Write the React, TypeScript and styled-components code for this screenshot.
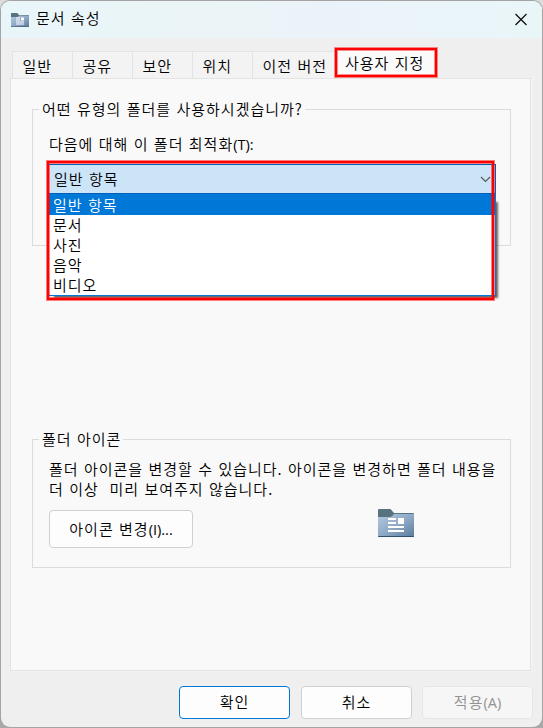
import React from "react";
import styled, { createGlobalStyle } from "styled-components";

const Global = createGlobalStyle`
  *,*::before,*::after{box-sizing:border-box}
  html,body{margin:0;padding:0;width:543px;height:728px;overflow:hidden}
  body{background:#a5a5a5;color:#000;font:350 15px/20px "Noto Sans CJK KR","Noto Sans CJK KR DemiLight",sans-serif;letter-spacing:1px;word-spacing:1px;white-space:pre}
  button{font:inherit;letter-spacing:inherit;word-spacing:inherit;color:inherit;margin:0;padding:0}
`;
const Backdrop = styled.div`
  width: 543px; height: 728px; padding: 1px;
  background: linear-gradient(#dcdcdc 0 12px, #a9a9a9 12px);
`;
const Window = styled.div`
  width: 541px; height: 726px; background: #efefef; border-radius: 9px; overflow: hidden;
  box-shadow: 0 0 0 1px #a5a3a4;
  display: flex; flex-direction: column;
`;
const TitleBar = styled.header`
  height: 37px; flex: none; display: flex; align-items: center; padding: 0 14px 0 10px;
  background: linear-gradient(90deg, #e9f6f9, #ebf4f7 45%, #ebf3fa 60%, #e9f6f8);
`;
const Title = styled.span`flex: 1; margin-left: 7px; padding-bottom: 4px;`;
const CloseButton = styled.button`
  border: 0; background: none; width: 14px; height: 14px; display: flex;
`;
const Tabs = styled.nav`
  height: 40px; flex: none; display: flex; align-items: flex-end; padding-left: 11px;
`;
const Tab = styled.button<{ $w: number }>`
  width: ${p => p.$w}px; height: 27px; border: 1px solid #e3e3e3; border-width: 1px 0 0 1px;
  background: #f3f3f3; text-align: left; padding-left: 9.5px; line-height: 25px;
`;
const SelectedTab = styled.button`
  width: 102px; height: 29px; background: #fafafa; border: 2px solid #f00; position: relative;
  box-shadow: 0 0 0 1px #ff000070, inset 0 0 0 1px #ff000070;
  text-align: left; padding-left: 8px; line-height: 23px; margin-bottom: 1px;
`;
const Panel = styled.main`
  width: 521px; height: 593px; flex: none; margin-left: 9px; background: #f9f9f9;
  border: 1px solid #e3e3e3; padding: 20px 19px 0 21px; box-shadow: 2px 1px 0 #f2f2f2;
`;
const Group = styled.section<{ $h: number; $gap: number }>`
  height: ${p => p.$h}px; border: 1px solid #dcdcdc; margin: 10px 0 ${p => p.$gap}px;
  padding: 0 14px 0 16px;
`;
const Legend = styled.h2`
  font: inherit; margin: -12px 0 0 -10px; padding: 0 2px 0 3px; height: 22px; line-height: 22px;
  width: max-content; background: #f9f9f9;
`;
const Label = styled.div`margin-top: 14px; height: 20px;`;
const Latin = styled.span`
  font-family: "Open Sans", "Noto Sans", sans-serif; font-weight: 400; font-size: 14.5px;
  letter-spacing: 0; line-height: 1;
`;
const Select = styled.div`
  position: relative; width: 448px; height: 132px; margin: 10px 0 0 -1px; z-index: 2;
  background: #fff;
  &::before {
    content: ""; position: absolute; inset: 36px 0 0 4px; z-index: -1; box-shadow: 2px 2px 2px 0 #0009;
  }
  &::after {
    content: ""; position: absolute; left: -1px; top: -3px; width: 447px; height: 139px;
    border: 2px solid #f00; box-shadow: 0 0 0 1px #ff000080, inset 0 0 0 1px #ff000080;
  }
`;
const Current = styled.div`
  height: 29px; display: flex; align-items: center; justify-content: space-between;
  background: #cce4f8; border: 1px solid #005fb8; border-bottom: 0; padding: 0 4px 0 5px;
`;
const Options = styled.div`
  border: 1px solid #0078d7; border-top-color: #005fb8; height: 103px; background: #fff;
`;
const Option = styled.div<{ $on?: boolean }>`
  height: ${p => (p.$on ? 21 : 20)}px; line-height: ${p => (p.$on ? 21 : 19)}px; padding-left: 4px;
  background: ${p => (p.$on ? "#0078d7" : "#fff")}; color: ${p => (p.$on ? "#fff" : "#000")};
`;
const Description = styled.p`margin: 9px -10px 0 0;`;
const IconRow = styled.div`
  display: flex; justify-content: space-between; align-items: flex-start; padding: 10px 82px 0 0;
`;
const Button = styled.button<{ $w: number; $h: number; $kind?: "primary" | "disabled" }>`
  width: ${p => p.$w}px; height: ${p => p.$h}px; border-radius: 4px; padding-bottom: 2px;
  border: 1px solid ${p => (p.$kind === "primary" ? "#0078d4" : p.$kind === "disabled" ? "#e6e6e6" : "#d0d0d0")};
  background: ${p => (p.$kind === "disabled" ? "#f6f6f6" : "#fdfdfd")};
  color: ${p => (p.$kind === "disabled" ? "#929292" : "#000")};
`;
const ChangeIconButton = styled(Button)`margin-top: 1px; padding-bottom: 0;`;
const ApplyButton = styled(Button)`margin-left: -1px;`;
const Footer = styled.footer`display: flex; gap: 11px; padding: 15px 0 0 178px;`;

const FolderIcon = ({ w, h }: { w: number; h: number }) => (
  <svg width={w} height={h} viewBox="0 0 36 28" preserveAspectRatio="none">
    <defs>
      <linearGradient id="folder" x1="0" y1="0" x2="1" y2="1">
        <stop offset="0" stopColor="#b4c9de" />
        <stop offset=".5" stopColor="#8faac8" />
        <stop offset="1" stopColor="#5c7b9d" />
      </linearGradient>
    </defs>
    <path d="M1 0H12.5L16 4H35a1 1 0 0 1 1 1V14H0V1Q0 0 1 0" fill="#56737f" />
    <path d="M0 8H12Q14 8 16 5H36V27Q36 28 35 28H1Q0 28 0 27Z" fill="url(#folder)" />
    <path d="M0 27H36Q36 28 35 28H1Q0 28 0 27" fill="#324f6b" />
    <path d="M10 9h8v2h-8zM10 13h8v2h-8zM20 9h6v6h-6zM10 17h16v2H10zM10 21h16v2H10z" fill="#fff" />
  </svg>
);

const tabs = ["일반", "공유", "보안", "위치"];
const options = ["일반 항목", "문서", "사진", "음악", "비디오"];

export default function App() {
  return (
    <>
      <Global />
      <Backdrop>
        <Window>
          <TitleBar>
            <FolderIcon w={18} h={14} />
            <Title>문서 속성</Title>
            <CloseButton aria-label="닫기">
              <svg width="14" height="14" viewBox="0 0 14 14">
                <path d="M1.5 1 12.5 12M12.5 1 1.5 12" stroke="#111" strokeWidth="1.3" />
              </svg>
            </CloseButton>
          </TitleBar>
          <Tabs>
            {tabs.map(t => <Tab key={t} $w={60}>{t}</Tab>)}
            <Tab $w={83}>이전 버전</Tab>
            <SelectedTab>사용자 지정</SelectedTab>
          </Tabs>
          <Panel>
            <Group $h={137} $gap={193}>
              <Legend>어떤 유형의 폴더를 사용하시겠습니까?</Legend>
              <Label>다음에 대해 이 폴더 최적화<Latin>(T):</Latin></Label>
              <Select>
                <Current>
                  일반 항목
                  <svg width="11" height="7" viewBox="0 0 11 7">
                    <path d="M1 1 5.5 5.5 10 1" fill="none" stroke="#555" strokeWidth="1.1" />
                  </svg>
                </Current>
                <Options>
                  {options.map((o, i) => <Option key={o} $on={i === 0}>{o}</Option>)}
                </Options>
              </Select>
            </Group>
            <Group $h={129} $gap={0}>
              <Legend>폴더 아이콘</Legend>
              <Description>{"폴더 아이콘을 변경할 수 있습니다. 아이콘을 변경하면 폴더 내용을\n더 이상  미리 보여주지 않습니다."}</Description>
              <IconRow>
                <ChangeIconButton $w={144} $h={38}>아이콘 변경<Latin>(I)...</Latin></ChangeIconButton>
                <FolderIcon w={36} h={28} />
              </IconRow>
            </Group>
          </Panel>
          <Footer>
            <Button $w={111} $h={33} $kind="primary">확인</Button>
            <Button $w={111} $h={33}>취소</Button>
            <ApplyButton $w={111} $h={33} $kind="disabled">적용<Latin>(A)</Latin></ApplyButton>
          </Footer>
        </Window>
      </Backdrop>
    </>
  );
}
